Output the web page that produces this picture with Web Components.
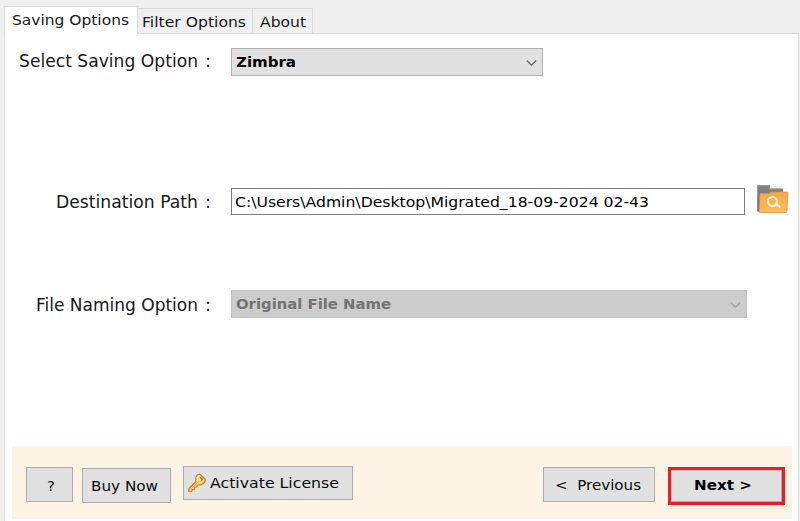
<!DOCTYPE html>
<html lang="en"><head><meta charset="utf-8"><title>Saving Options</title>
<style>
html,body{margin:0;height:521px;overflow:hidden;background:#efefef;font-family:"DejaVu Sans",sans-serif;color:#171717}
</style></head><body>
<app-window></app-window>
<script>
// One line of text, stretched so that it fills the width given in "w".
class FitText extends HTMLElement{
 connectedCallback(){
  const r=this.attachShadow({mode:'open'});
  r.innerHTML='<style>:host{display:block;white-space:pre;line-height:20px;height:20px;flex:none}span{display:inline-block;transform-origin:0 50%}</style><span></span>';
  const s=r.querySelector('span'),t=this.getAttribute('text'),w=+this.getAttribute('w');
  s.textContent=t;
  this.style.fontSize=(this.getAttribute('size')||14.5)+'px';
  if(w){const n=s.getBoundingClientRect().width;s.style.transform='scaleX('+w/n+')';this.style.width=w+'px';}
 }}
customElements.define('fit-text',FitText);

class TabItem extends HTMLElement{
 connectedCallback(){this.attachShadow({mode:'open'}).innerHTML=`<style>
 :host{display:flex;box-sizing:border-box;height:25px;border:1px solid #dadada;border-left:0;border-bottom:0;background:#f0f0f0;padding:3px 0 0 4px}
 :host([active]){height:28px;background:#fff;border-left:1px solid #dadada;padding:3px 0 0 7px}
 </style><slot></slot>`}}
customElements.define('tab-item',TabItem);

class DropDown extends HTMLElement{
 connectedCallback(){this.attachShadow({mode:'open'}).innerHTML=`<style>
 :host{display:flex;box-sizing:border-box;height:28px;border:1px solid #b0b0b0;background:#e1e1e1;color:#000;align-items:center;justify-content:space-between;padding:0 5px 0 4px;font-weight:bold}
 :host([disabled]){background:#ccc;border-color:#c1c1c1;color:#737373}
 svg{stroke:#707070;margin-top:1px}:host([disabled]) svg{stroke:#a6a6a6}
 </style><slot></slot><svg width="11" height="8" viewBox="0 0 11 8" fill="none" stroke-width="1.4"><path d="M.8 1.6 5.5 6.3 10.2 1.6"/></svg>`}}
customElements.define('drop-down',DropDown);

class PathField extends HTMLElement{
 connectedCallback(){this.attachShadow({mode:'open'}).innerHTML=`<style>
 :host{display:flex;box-sizing:border-box;height:27px;border:1px solid #7c7c7c;background:#fff;padding:3px 0 0 3px;color:#000}
 </style><slot></slot>`}}
customElements.define('path-field',PathField);

class PushButton extends HTMLElement{
 connectedCallback(){this.attachShadow({mode:'open'}).innerHTML=`<style>
 :host{display:flex;box-sizing:border-box;height:35px;border:1px solid #adadad;background:#e1e1e1;flex:none;color:#0c0c0c;padding-top:8px}
 :host([primary]){height:38px;border:3px solid #ed1c24;font-weight:bold;color:#000;box-shadow:inset -1px -1px #adadad,inset 1px 1px #c4c4c4}
 </style><slot></slot>`}}
customElements.define('push-button',PushButton);

class FolderIcon extends HTMLElement{
 connectedCallback(){this.attachShadow({mode:'open'}).innerHTML=`<style>:host{display:block;width:33px;height:30px}svg{display:block}</style>
 <svg width="33" height="30" viewBox="0 0 33 30"><defs><linearGradient id="g" x2="0" y2="1"><stop stop-color="#858585"/><stop offset="1" stop-color="#666"/></linearGradient><linearGradient id="o" x2="0" y2="1"><stop stop-color="#f5aa46"/><stop offset="1" stop-color="#fdbb63"/></linearGradient></defs>
 <path d="M1 2Q1 1 2 1H13Q14 1 14 2V4.500H26Q27 4.500 27 6V28H3Q1 28 1 26Z" fill="url(#g)"/>
 <path d="M1.500 26V1.500H13.500V5H26.500" fill="none" stroke="#a2a2a2" stroke-width=".7"/>
 <path d="M4.500 9.500H13L15 8H31Q32 8 31.900 9L31 27Q30.900 28.500 29.500 28.500H4.500Q3 28.500 3.100 27L4 10Z" fill="url(#o)" stroke="#dc9341" stroke-width=".8"/>
 <circle cx="16.500" cy="17.500" r="4.500" fill="none" stroke="#ffefd2" stroke-width="2"/><path d="M20 20 23.500 22.800" stroke="#ffefd2" stroke-width="2.500" stroke-linecap="round"/></svg>`}}
customElements.define('folder-icon',FolderIcon);

class KeyIcon extends HTMLElement{
 connectedCallback(){this.attachShadow({mode:'open'}).innerHTML=`<style>:host{display:block;width:19px;height:20px}svg{display:block}</style>
 <svg width="19" height="20" viewBox="0 0 19 20"><path d="M11.500 1 17.500 6.500 16.500 9.500 13 12H9.500L8.500 14H7L6.500 16.500H4.500L3.500 18.500H.8L1 15.500 7.800 8.500V4.500L9.500 1.800Z" fill="#ffd66d" stroke="#c57c2d" stroke-width="1.200" stroke-linejoin="round"/><path d="M2 16.800 9.200 9.500" stroke="#e1a044" stroke-width="1"/><path d="M9.500 7.500V4.800L11.300 2.700" fill="none" stroke="#fff0af" stroke-width="1.200"/><path d="m12 4 2.500 2.200-1.300 1.300" fill="none" stroke="#a8773c" stroke-width="1.300"/></svg>`}}
customElements.define('key-icon',KeyIcon);

class AppWindow extends HTMLElement{
 connectedCallback(){this.attachShadow({mode:'open'}).innerHTML=`<style>
 :host{display:flex;flex-direction:column;box-sizing:border-box;height:521px;padding:6px 1px 0 4px}
 nav{display:flex;align-items:flex-end;height:28px;flex:none;background:linear-gradient(#dadada,#dadada) 0 27px/100% 1px no-repeat}
 nav tab-item:not([active]){margin-bottom:1px}
 main{flex:1;display:flex;flex-direction:column;box-sizing:border-box;background:#fff;border:solid #e1e1e1;border-width:0 1px}
 .row{display:grid;grid-template-columns:226px auto;justify-content:start;align-items:start;flex:none}
 .label{display:flex;justify-content:flex-end;padding-right:20px}
 .label fit-text:last-child{margin-left:7px}
 .pick{display:flex;gap:11px}
 footer{display:flex;box-sizing:border-box;height:73px;margin:auto 6px 2px 7px;padding:20px 7px 0 14px;background:#fdf4e5}
 </style>
 <nav>
  <tab-item active style="width:134px"><fit-text text="Saving Options" w="117"></fit-text></tab-item>
  <tab-item style="width:115px"><fit-text text="Filter Options" w="104"></fit-text></tab-item>
  <tab-item style="width:60px;padding-left:7px"><fit-text text="About" w="46"></fit-text></tab-item>
 </nav>
 <main>
  <div class="row" style="padding-top:14px;height:126px"><div class="label" style="padding-top:3px"><fit-text size="17" text="Select Saving Option" w="179"></fit-text><fit-text size="17" text=":" w="6"></fit-text></div><drop-down style="width:312px"><fit-text text="Zimbra" w="60"></fit-text></drop-down></div>
  <div class="row" style="height:102px"><div class="label" style="padding-top:18px"><fit-text size="17" text="Destination Path" w="142"></fit-text><fit-text size="17" text=":" w="6"></fit-text></div><div class="pick"><path-field style="width:514px;margin-top:14px"><fit-text text="C:\\Users\\Admin\\Desktop\\Migrated_18-09-2024 02-43" w="414"></fit-text></path-field><folder-icon style="margin-top:10px"></folder-icon></div></div>
  <div class="row"><div class="label" style="padding-top:19px"><fit-text size="17" text="File Naming Option" w="162"></fit-text><fit-text size="17" text=":" w="6"></fit-text></div><drop-down disabled style="width:516px;margin-top:14px"><fit-text text="Original File Name" w="155"></fit-text></drop-down></div>
  <footer>
   <push-button style="width:47px;padding-left:20px;margin-top:1px"><fit-text text="?" w="8"></fit-text></push-button>
   <push-button style="width:89px;margin:2px 0 0 9px;padding:7px 0 0 8px"><fit-text text="Buy Now" w="67"></fit-text></push-button>
   <push-button style="width:170px;height:34px;margin-left:12px;padding:6px 0 0 4px"><key-icon style="margin-right:3px"></key-icon><fit-text text="Activate License" w="129"></fit-text></push-button>
   <push-button style="width:112px;margin:1px 0 0 auto;padding:7px 0 0 11px"><fit-text text="&lt;  Previous" w="86"></fit-text></push-button>
   <push-button primary style="width:117px;margin:1px 0 0 13px;padding:5px 0 0 23px"><fit-text text="Next &gt;" w="58"></fit-text></push-button>
  </footer>
 </main>`}}
customElements.define('app-window',AppWindow);
</script></body></html>
